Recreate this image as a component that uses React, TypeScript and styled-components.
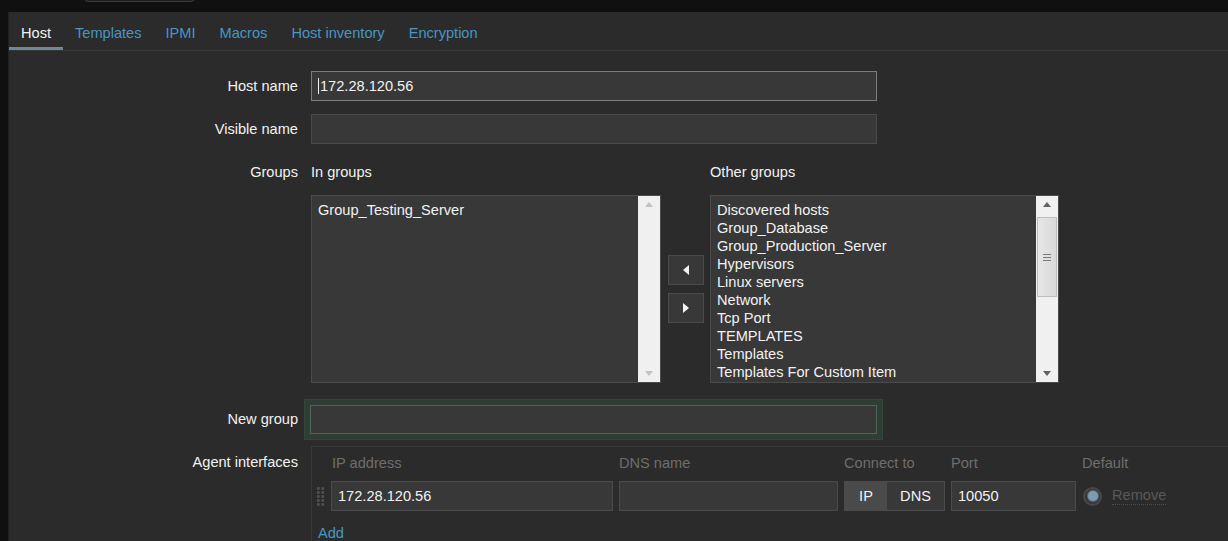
import styled, { createGlobalStyle } from 'styled-components';

const GlobalStyle = createGlobalStyle`
  body {
    margin: 0;
    background: #101010;
    font-family: "Liberation Sans", Arial, sans-serif;
    font-size: 14.6px;
    color: #f2f2f2;
  }
`;

const TopStrip = styled.div`
  height: 12px;
  overflow: hidden;
  padding-left: 84px;
`;
const SearchStub = styled.div`
  width: 111px;
  height: 22px;
  margin-top: -20px;
  box-sizing: border-box;
  border: 1px solid #3a3a3a;
  border-radius: 4px;
  background: #1d1d1d;
`;

const Panel = styled.div`
  margin-left: 8px;
  min-height: 529px;
  background: #2b2b2b;
  border-left: 1px solid #222;
`;

const TabBar = styled.div`
  display: flex;
  height: 38px;
  border-bottom: 1px solid #383838;
`;
const Tab = styled.div<{ $active?: boolean }>`
  display: flex;
  align-items: center;
  padding: 4px 12px 0;
  color: ${({ $active }) => ($active ? '#f2f2f2' : '#4796c4')};
  box-shadow: ${({ $active }) => ($active ? 'inset 0 -3px 0 #6f8898' : 'none')};
`;

const Form = styled.div`
  padding-top: 20px;
`;
const Row = styled.div<{ $top?: number }>`
  display: grid;
  grid-template-columns: 289px 1fr;
  column-gap: 13px;
  margin-top: ${({ $top }) => $top ?? 0}px;
`;
const Label = styled.div<{ $pad?: number }>`
  text-align: right;
  line-height: 18px;
  padding-top: ${({ $pad }) => $pad ?? 6}px;
`;

const Field = styled.div<{ $w: number; $h?: number; $focused?: boolean; $green?: boolean }>`
  display: flex;
  align-items: center;
  box-sizing: border-box;
  width: ${({ $w }) => $w}px;
  height: ${({ $h }) => $h ?? 30}px;
  padding: 0 6px;
  background: #383838;
  border: 1px solid ${({ $focused, $green }) => ($focused ? '#7c7c7c' : $green ? '#4a6656' : '#4b4b4b')};
  white-space: nowrap;
`;
const Caret = styled.span`
  display: inline-block;
  width: 1px;
  height: 16px;
  margin-right: 1px;
  background: #f2f2f2;
`;

const GroupsWrap = styled.div`
  display: flex;
`;
const GroupCol = styled.div<{ $w: number }>`
  width: ${({ $w }) => $w}px;
`;
const Caption = styled.div`
  line-height: 18px;
  padding: 6px 0;
  margin-bottom: 8px;
`;
const MoveCol = styled.div`
  width: 49px;
  height: 188px;
  margin-top: 38px;
  display: flex;
  flex-direction: column;
  align-items: center;
  justify-content: center;
  gap: 8px;
`;
const MoveButton = styled.div`
  display: flex;
  align-items: center;
  justify-content: center;
  box-sizing: border-box;
  width: 36px;
  height: 30px;
  background: #383838;
  border: 1px solid #4b4b4b;
`;

const ListBox = styled.div`
  display: flex;
  box-sizing: border-box;
  height: 188px;
  background: #383838;
  border: 1px solid #4b4b4b;
`;
const ListItems = styled.div`
  flex: 1;
  padding: 5px 6px;
  overflow: hidden;
  line-height: 18px;
`;
const Scrollbar = styled.div`
  width: 22px;
  display: flex;
  flex-direction: column;
  background: #f0f0f0;
`;
const ScrollArrow = styled.div`
  height: 17px;
  display: flex;
  align-items: center;
  justify-content: center;
`;
const ScrollTrack = styled.div`
  flex: 1;
  padding: 0 1px;
`;
const Thumb = styled.div`
  height: 80px;
  margin-top: 4px;
  box-sizing: border-box;
  border: 1px solid #bdbdbd;
  background: linear-gradient(to right, #e6e6e6, #d9d9d9);
  display: flex;
  flex-direction: column;
  align-items: center;
  justify-content: center;
  gap: 2px;
`;
const Grip = styled.div`
  width: 8px;
  height: 1px;
  background: #7c7c7c;
`;

const NewGroupWrap = styled.div`
  margin-left: -7px;
  width: fit-content;
  padding: 5px;
  background: #2f3d35;
  border: 1px solid #34463b;
`;

const Interfaces = styled.div`
  border-top: 1px solid #393939;
  border-left: 1px solid #393939;
  padding-top: 7px;
`;
const IfGrid = styled.div`
  display: grid;
  grid-template-columns: 13px 282px 219px 101px 125px auto;
  column-gap: 6px;
  row-gap: 9px;
  align-items: center;
`;
const HeadCell = styled.div<{ $pad?: number }>`
  color: #6e6e6e;
  line-height: 18px;
  padding-left: ${({ $pad }) => $pad ?? 0}px;
  white-space: nowrap;
`;
const Handle = styled.div`
  padding-left: 5px;
  display: flex;
`;
const Toggle = styled.div`
  display: flex;
  box-sizing: border-box;
  height: 30px;
  border: 1px solid #4b4b4b;
`;
const ToggleOption = styled.div<{ $on?: boolean; $w?: number }>`
  display: flex;
  align-items: center;
  justify-content: center;
  ${({ $w }) => ($w ? `width: ${$w}px;` : 'flex: 1;')}
  background: ${({ $on }) => ($on ? '#4a4a4a' : '#383838')};
`;
const DefaultCell = styled.div`
  display: flex;
  align-items: center;
  gap: 10px;
  padding-left: 1px;
`;
const Radio = styled.div`
  box-sizing: border-box;
  width: 19px;
  height: 19px;
  border-radius: 50%;
  background: #383838;
  border: 2px solid #474747;
  display: flex;
  align-items: center;
  justify-content: center;
`;
const RadioDot = styled.div`
  width: 10px;
  height: 10px;
  border-radius: 50%;
  background: #7d9caf;
  box-shadow: 0 0 0 1px #566a78;
`;
const RemoveLink = styled.span`
  color: #595959;
  border-bottom: 1px dotted #4e4e4e;
  line-height: 17px;
`;
const AddLink = styled.div`
  padding: 13px 0 0 6px;
  color: #4796c4;
  line-height: 18px;
`;

const Arrow = ({ dir, color }: { dir: 'up' | 'down' | 'left' | 'right'; color: string }) => {
  const pts = {
    up: '0,5 4,0 8,5',
    down: '0,0 8,0 4,5',
    left: '6,0 6,10 0,5',
    right: '0,0 0,10 6,5',
  }[dir];
  const horiz = dir === 'left' || dir === 'right';
  return (
    <svg width={horiz ? 6 : 8} height={horiz ? 10 : 5} viewBox={horiz ? '0 0 6 10' : '0 0 8 5'}>
      <polygon points={pts} fill={color} />
    </svg>
  );
};

const DragDots = () => (
  <svg width="9" height="21" viewBox="0 0 9 21">
    {[0, 1, 2, 3, 4].map((r) =>
      [0, 1].map((c) => <rect key={`${r}-${c}`} x={c * 5} y={r * 4.5} width="3" height="3" fill="#4f4f4f" />)
    )}
  </svg>
);

const otherGroups = [
  'Discovered hosts',
  'Group_Database',
  'Group_Production_Server',
  'Hypervisors',
  'Linux servers',
  'Network',
  'Tcp Port',
  'TEMPLATES',
  'Templates',
  'Templates For Custom Item',
];

const tabs = ['Host', 'Templates', 'IPMI', 'Macros', 'Host inventory', 'Encryption'];

const App = () => {
  return (
    <>
      <GlobalStyle />
      <TopStrip>
        <SearchStub />
      </TopStrip>
      <Panel>
        <TabBar>
          {tabs.map((t, i) => (
            <Tab key={t} $active={i === 0}>
              {t}
            </Tab>
          ))}
        </TabBar>
        <Form>
          <Row>
            <Label>Host name</Label>
            <Field $w={566} $focused>
              <Caret />
              172.28.120.56
            </Field>
          </Row>
          <Row $top={13}>
            <Label>Visible name</Label>
            <Field $w={566} />
          </Row>
          <Row $top={13}>
            <Label>Groups</Label>
            <GroupsWrap>
              <GroupCol $w={350}>
                <Caption>In groups</Caption>
                <ListBox>
                  <ListItems>
                    <div>Group_Testing_Server</div>
                  </ListItems>
                  <Scrollbar>
                    <ScrollArrow>
                      <Arrow dir="up" color="#c2c2c2" />
                    </ScrollArrow>
                    <ScrollTrack />
                    <ScrollArrow>
                      <Arrow dir="down" color="#c2c2c2" />
                    </ScrollArrow>
                  </Scrollbar>
                </ListBox>
              </GroupCol>
              <MoveCol>
                <MoveButton>
                  <Arrow dir="left" color="#f2f2f2" />
                </MoveButton>
                <MoveButton>
                  <Arrow dir="right" color="#f2f2f2" />
                </MoveButton>
              </MoveCol>
              <GroupCol $w={349}>
                <Caption>Other groups</Caption>
                <ListBox>
                  <ListItems>
                    {otherGroups.map((g) => (
                      <div key={g}>{g}</div>
                    ))}
                  </ListItems>
                  <Scrollbar>
                    <ScrollArrow>
                      <Arrow dir="up" color="#606060" />
                    </ScrollArrow>
                    <ScrollTrack>
                      <Thumb>
                        <Grip />
                        <Grip />
                        <Grip />
                      </Thumb>
                    </ScrollTrack>
                    <ScrollArrow>
                      <Arrow dir="down" color="#606060" />
                    </ScrollArrow>
                  </Scrollbar>
                </ListBox>
              </GroupCol>
            </GroupsWrap>
          </Row>
          <Row $top={16}>
            <Label $pad={11}>New group</Label>
            <NewGroupWrap>
              <Field $w={567} $h={29} $green />
            </NewGroupWrap>
          </Row>
          <Row $top={6}>
            <Label $pad={7}>Agent interfaces</Label>
            <Interfaces>
              <IfGrid>
                <div />
                <HeadCell $pad={1}>IP address</HeadCell>
                <HeadCell>DNS name</HeadCell>
                <HeadCell>Connect to</HeadCell>
                <HeadCell>Port</HeadCell>
                <HeadCell>Default</HeadCell>

                <Handle>
                  <DragDots />
                </Handle>
                <Field $w={282}>172.28.120.56</Field>
                <Field $w={219} />
                <Toggle>
                  <ToggleOption $on $w={42}>
                    IP
                  </ToggleOption>
                  <ToggleOption>DNS</ToggleOption>
                </Toggle>
                <Field $w={125}>10050</Field>
                <DefaultCell>
                  <Radio>
                    <RadioDot />
                  </Radio>
                  <RemoveLink>Remove</RemoveLink>
                </DefaultCell>
              </IfGrid>
              <AddLink>Add</AddLink>
            </Interfaces>
          </Row>
        </Form>
      </Panel>
    </>
  );
};

export default App;
